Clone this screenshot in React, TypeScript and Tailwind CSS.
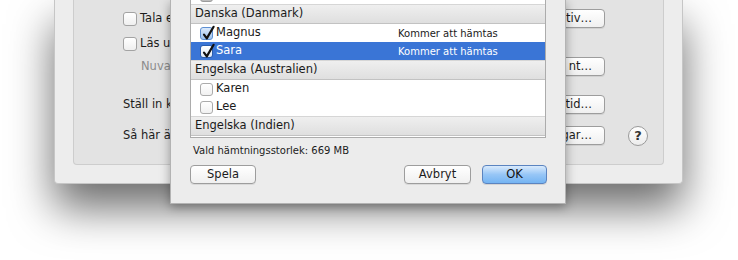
import type { ReactNode } from 'react'

type Voice = { name: string; checked?: boolean; status?: string; selected?: boolean }
type Group = { title: string; voices: Voice[] }

const groups: Group[] = [
  {
    title: 'Danska (Danmark)',
    voices: [
      { name: 'Magnus', checked: true, status: 'Kommer att hämtas' },
      { name: 'Sara', checked: true, status: 'Kommer att hämtas', selected: true },
    ],
  },
  {
    title: 'Engelska (Australien)',
    voices: [{ name: 'Karen' }, { name: 'Lee' }],
  },
  { title: 'Engelska (Indien)', voices: [] },
]

function Tick() {
  return (
    <svg className="absolute left-0 top-0 overflow-visible" width="13" height="13" viewBox="0 0 13 13" fill="none">
      <path d="M3 6.6L5.8 10.4L12.6 -1.2" stroke="#111" strokeWidth="2.2" strokeLinecap="round" strokeLinejoin="round" />
    </svg>
  )
}

function ListCheck({ checked, selected }: { checked?: boolean; selected?: boolean }) {
  return (
    <span
      className={
        checked
          ? selected
            ? 'relative h-[13px] w-[13px] shrink-0 rounded-[3px] border border-[#2a5cad] bg-gradient-to-b from-[#ffffff] to-[#dfe9f6]'
            : 'relative h-[13px] w-[13px] shrink-0 rounded-[3px] border border-[#5d8fd2] bg-gradient-to-b from-[#dbe9fb] to-[#9cc3ef]'
          : 'relative h-[13px] w-[13px] shrink-0 rounded-[3px] border border-[#ababab] bg-gradient-to-b from-[#ffffff] to-[#f1f1f1]'
      }
    >
      {checked && <Tick />}
    </span>
  )
}

function MacButton({ children, className = '' }: { children: ReactNode; className?: string }) {
  return (
    <button
      className={
        'flex h-[19px] shrink-0 items-center whitespace-nowrap rounded-[4px] border border-[#9d9d9d] bg-gradient-to-b from-[#ffffff] to-[#f0f0f0] text-[11.5px] leading-none text-[#1c1c1c] shadow-[0_1px_0_rgba(0,0,0,0.08)] ' +
        className
      }
    >
      {children}
    </button>
  )
}

function BackCheck() {
  return (
    <span className="h-[14px] w-[14px] shrink-0 rounded-[3px] border border-[#a3a3a3] bg-gradient-to-b from-[#ffffff] to-[#efefef]" />
  )
}

// the sheet lies over the middle of these rows; only their ends peek out
function BackRow({ children, button, help }: { children: ReactNode; button?: string; help?: boolean }) {
  return (
    <div className="flex h-[19px] items-center">
      <div className="flex flex-1 items-center gap-[3px] whitespace-nowrap">{children}</div>
      {button && <MacButton className="w-[80px] justify-end pr-[12px]">{button}</MacButton>}
      <div className="ml-[23px] flex w-[20px] justify-center">
        {help && (
          <span className="flex h-[20px] w-[20px] items-center justify-center rounded-full border border-[#9a9a9a] bg-gradient-to-b from-[#ffffff] to-[#ececec] text-[13px] font-semibold leading-none text-[#333]">
            ?
          </span>
        )}
      </div>
    </div>
  )
}

function BackWindow() {
  return (
    <div className="ml-[54px] h-[184px] w-[629px] rounded-b-[4px] border-x border-b border-[#c6c6c6] bg-[#ededed] px-[18px] pb-[18px] shadow-[0_24px_44px_rgba(0,0,0,0.58)]">
      <div className="h-full rounded-b-[4px] border-x border-b border-[#cdcdcd] bg-[#e3e3e3] pl-[49px] pr-[15px] pt-[9px]">
        <BackRow button="tiv…">
          <BackCheck />
          <span>Tala e</span>
        </BackRow>
        <div className="mt-[6px]">
          <BackRow>
            <BackCheck />
            <span>Läs u</span>
          </BackRow>
        </div>
        <div className="mt-[4px]">
          <BackRow button="nt…">
            <span className="pl-[18px] text-[#8c8c8c]">Nuva</span>
          </BackRow>
        </div>
        <div className="mt-[19px]">
          <BackRow button="tid…">
            <span>Ställ in k</span>
          </BackRow>
        </div>
        <div className="mt-[12px]">
          <BackRow button="gar…" help>
            <span>Så här ä</span>
          </BackRow>
        </div>
      </div>
    </div>
  )
}

function GroupHeader({ title }: { title: string }) {
  return (
    <div className="flex h-[20px] items-center border-y border-b-[#c2c2c2] border-t-[#d6d6d6] bg-gradient-to-b from-[#efefef] to-[#dfdfdf] pl-[4px] text-[11.5px] text-[#1a1a1a]">
      {title}
    </div>
  )
}

function VoiceRow({ v }: { v: Voice }) {
  return (
    <div
      className={
        v.selected
          ? 'flex h-[18px] items-center bg-[#3a75d6] pl-[9px] text-white'
          : 'flex h-[18px] items-center bg-white pl-[9px] text-[#1a1a1a]'
      }
    >
      <ListCheck checked={v.checked} selected={v.selected} />
      <span className="ml-[3px] w-[182px] text-[11.5px]">{v.name}</span>
      <span className="text-[10px]">{v.status}</span>
    </div>
  )
}

function Sheet() {
  return (
    <div className="absolute left-[170px] top-0 h-[204px] w-[396px] border-x border-b border-[#b3b3b3] bg-[#ececec] px-[19px] shadow-[0_3px_10px_rgba(0,0,0,0.35)]">
      <div className="h-[138px] overflow-hidden border-x border-b border-[#acacac] bg-white">
        <div className="-mt-[14px]">
          <div className="flex h-[18px] items-center bg-white pl-[9px]">
            <span className="h-[13px] w-[13px] rounded-[3px] border border-[#9b9b9b] bg-[#bdbdbd]" />
          </div>
          {groups.map((g) => (
            <div key={g.title}>
              <GroupHeader title={g.title} />
              {g.voices.map((v) => (
                <VoiceRow key={v.name} v={v} />
              ))}
            </div>
          ))}
        </div>
      </div>

      <p className="mt-[6px] h-[14px] pl-[3px] text-[10px] leading-[14px] text-[#1c1c1c]">
        Vald hämtningsstorlek: 669 MB
      </p>

      <div className="mt-[7px] flex items-center">
        <MacButton className="w-[66px] justify-center">Spela</MacButton>
        <div className="flex-1" />
        <MacButton className="w-[67px] justify-center">Avbryt</MacButton>
        <button className="ml-[11px] mr-[-1px] flex h-[19px] w-[65px] items-center justify-center rounded-[4px] border border-[#5b84c0] bg-gradient-to-b from-[#d9eafc] via-[#97c6f6] to-[#74b4f2] text-[11.5px] leading-none text-[#111] shadow-[0_1px_0_rgba(0,0,0,0.1)]">
          OK
        </button>
      </div>
    </div>
  )
}

export default function App() {
  return (
    <div className="relative h-[260px] w-[738px] overflow-hidden bg-white font-['DejaVu_Sans',sans-serif] text-[11.5px] text-[#1c1c1c]">
      <BackWindow />
      <Sheet />
    </div>
  )
}
